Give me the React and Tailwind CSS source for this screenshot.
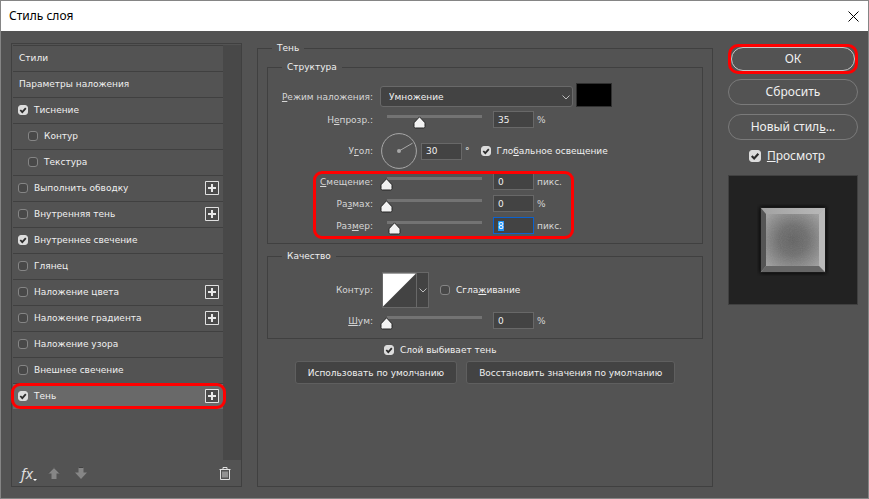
import React, { useEffect, useId, useRef, useState } from "react";
import clsx from "clsx";

const STYLES = [
  { name: "Тиснение", checked: true },
  { name: "Контур", nested: true },
  { name: "Текстура", nested: true },
  { name: "Выполнить обводку", plus: true },
  { name: "Внутренняя тень", plus: true },
  { name: "Внутреннее свечение", checked: true },
  { name: "Глянец" },
  { name: "Наложение цвета", plus: true },
  { name: "Наложение градиента", plus: true },
  { name: "Наложение узора" },
  { name: "Внешнее свечение" },
  { name: "Тень", checked: true, plus: true, active: true },
];

function Check({ children, checked, className, large }) {
  return (
    <label className={clsx("flex items-center", className)}>
      <span className="relative flex shrink-0">
        <input
          type="checkbox"
          defaultChecked={checked}
          className={clsx(
            "peer appearance-none rounded-[3px] border border-[#858585] bg-[#484848] checked:border-[#dcdcdc] checked:bg-[#dcdcdc]",
            large ? "size-3" : "size-[10px]"
          )}
        />
        <svg
          viewBox="0 0 10 10"
          className="pointer-events-none absolute inset-0 hidden size-full peer-checked:block"
        >
          <path
            d="M2.3 5 L4.3 7.1 L7.8 3.2"
            fill="none"
            stroke="#2b2b2b"
            strokeWidth="1.8"
          />
        </svg>
      </span>
      <span className="ml-[6px]">{children}</span>
    </label>
  );
}

function PlusButton({ name }) {
  return (
    <button type="button" aria-label={name} className="mr-1 shrink-0">
      <svg viewBox="0 0 14 14" className="block size-[14px]">
        <path
          d="M.5 .5h13v13h-13z"
          fill="#4b4b4b"
          stroke="#e0e0e0"
          strokeWidth="1"
        />
        <path d="M3 7h8M7 3v8" stroke="#e8e8e8" strokeWidth="2" />
      </svg>
    </button>
  );
}

function StylesPanel() {
  return (
    <section className="mt-[2px] flex w-[231px] shrink-0 flex-col border border-[#404040]">
      <div className="flex flex-1 pt-px pl-px">
        <ul className="flex-1">
          {["Стили", "Параметры наложения"].map((name) => (
            <li key={name} className="border-t border-[#404040]">
              <button
                type="button"
                className="flex h-[25px] w-full items-center pb-[2px] pl-[6px]"
              >
                {name}
              </button>
            </li>
          ))}
          {STYLES.map((item) => (
            <li
              key={item.name}
              className={clsx(
                "relative flex h-[26px] items-center justify-between border-t border-[#404040] pb-[2px]",
                item.nested ? "pl-[15px]" : "pl-[5px]",
                item.active && "bg-[#696969]"
              )}
            >
              <Check checked={item.checked}>{item.name}</Check>
              {item.plus && <PlusButton name={item.name} />}
              {item.active && (
                <span className="pointer-events-none absolute -top-px -right-[3px] bottom-0 -left-[2px] rounded-[9px] border-3 border-[#ff0000]" />
              )}
            </li>
          ))}
        </ul>
        <div className="w-[18px] bg-[#484848]" />
      </div>
      <div className="flex h-[26px] items-center pr-[10px] pl-[9px]">
        <button
          type="button"
          aria-label="fx"
          className="flex items-end font-['Noto_Sans',sans-serif] text-[15px] leading-4 text-[#dedede] italic"
        >
          fx
          <svg viewBox="0 0 4 2" className="h-[2px] w-1">
            <path d="M0 0h4L2 2z" fill="#fff" />
          </svg>
        </button>
        <button type="button" aria-label="Вверх" className="ml-[11px]">
          <svg viewBox="0 0 12 12" className="block size-3">
            <path d="M6 0l6 6.5H8.5V12h-5V6.5H0z" fill="#868686" />
            <path d="M0 6.500L6 .5l6 6" fill="none" stroke="#424242" />
          </svg>
        </button>
        <button type="button" aria-label="Вниз" className="ml-[15px]">
          <svg viewBox="0 0 12 12" className="block size-3">
            <path d="M6 12l6-6.500H8.500V0h-5v5.500H0z" fill="#868686" />
            <path d="M3.500 .5h5" stroke="#424242" />
          </svg>
        </button>
        <button type="button" aria-label="Удалить" className="ml-auto">
          <svg
            viewBox="0 0 12 13"
            className="block h-[13px] w-3"
            fill="none"
            stroke="#e0e0e0"
          >
            <path d="M.5 2.500h11M4 2.500v-2h4v2M1.500 2.500v10h9v-10" />
            <path d="M4 4.500v6M6 4.500v6M8 4.500v6" strokeWidth=".9" />
          </svg>
        </button>
      </div>
    </section>
  );
}

function Group({ title, className, children }) {
  return (
    <fieldset className={clsx("min-w-0 border border-[#404040]", className)}>
      <legend className="ml-[14px] px-[5px] leading-[14px]">{title}</legend>
      {children}
    </fieldset>
  );
}

function Caption({ htmlFor, children }) {
  return (
    <label
      htmlFor={htmlFor}
      className="w-[105px] shrink-0 text-right whitespace-nowrap text-[#d6d6d6]"
    >
      {children}
    </label>
  );
}

function NumberBox({ selected, ...props }) {
  const ref = useRef(null);

  useEffect(() => {
    if (selected) {
      ref.current.focus();
      ref.current.select();
    }
  }, [selected]);

  return (
    <input
      ref={ref}
      type="text"
      className="h-[17px] w-[41px] shrink-0 border border-[#686868] bg-[#434343] pl-1 outline-none selection:bg-[#1c94f7] selection:text-white focus:border-[#0a62d0]"
      {...props}
    />
  );
}

function SliderRow({ caption, name, initial, unit, selected, className }) {
  const id = useId();
  const [value, setValue] = useState(initial);

  return (
    <div className={clsx("flex h-[17px] items-center", className)}>
      <Caption htmlFor={id}>{caption}</Caption>
      <div className="relative ml-[14px] h-full w-[95px]">
        <div className="mt-1 h-[3px] bg-[#737373]" />
        <svg
          viewBox="0 0 13 13"
          className="absolute top-[5px] size-[13px] -translate-x-[7px]"
          style={{ left: `${value}%` }}
        >
          <path
            d="M6.500 .8L11.500 6.200Q12 6.800 12 7.500V10.500Q12 12 10.500 12H2.500Q1 12 1 10.500V7.500Q1 6.800 1.500 6.200z"
            fill="#f2f2f2"
            stroke="#262626"
          />
        </svg>
        <input
          type="range"
          min="0"
          max="100"
          aria-label={name}
          value={value}
          onChange={(e) => setValue(Number(e.target.value))}
          className="absolute inset-0 h-full w-full opacity-0"
        />
      </div>
      <div className="mr-[3px] ml-[11px] flex">
        <NumberBox
          id={id}
          value={value}
          selected={selected}
          onChange={(e) => setValue(Number(e.target.value) || 0)}
        />
      </div>
      <span className="text-[#d6d6d6]">{unit}</span>
    </div>
  );
}

function Structure() {
  return (
    <Group title="Структура" className="mx-[9px] mt-[5px] pb-[9px]">
      <div className="mt-[9px] flex h-6 items-end">
        <div className="flex h-[21px] items-center">
          <Caption htmlFor="blend">
            <u>Р</u>ежим наложения:
          </Caption>
          <div className="relative ml-[7px]">
            <select
              id="blend"
              className="block h-[21px] w-[193px] appearance-none rounded-[3px] border border-[#696969] bg-[#434343] pl-2"
            >
              <option>Умножение</option>
            </select>
            <svg
              viewBox="0 0 8 5"
              className="pointer-events-none absolute top-[9px] right-[3px] h-[5px] w-2"
            >
              <path d="M.5 .5L4 4L7.500 .5" fill="none" stroke="#bdbdbd" />
            </svg>
          </div>
        </div>
        <button
          type="button"
          aria-label="Цвет"
          className="ml-[3px] h-6 w-9 border border-[#303030] bg-black"
        />
      </div>
      <SliderRow
        className="mt-1"
        name="Непрозрачность"
        caption={
          <>
            Н<u>е</u>прозр.:
          </>
        }
        initial={35}
        unit="%"
      />
      <div className="mt-[5px] flex h-9 items-center">
        <Caption htmlFor="angle">
          У<u>г</u>ол:
        </Caption>
        <svg viewBox="0 0 36 36" className="ml-2 size-9" fill="none">
          <circle cx="18" cy="18" r="17.400" stroke="#a8a8a8" />
          <path d="M18 18L31.500 10.200" stroke="#a8a8a8" />
          <circle cx="18" cy="18" r="2" fill="#a8a8a8" />
        </svg>
        <div className="mr-[3px] ml-1 flex">
          <NumberBox id="angle" defaultValue="30" />
        </div>
        <span>°</span>
        <Check checked className="ml-[11px]">
          Гло<u>б</u>альное освещение
        </Check>
      </div>
      <div className="relative mt-1 flex flex-col gap-[5px]">
        <SliderRow
          name="Смещение"
          caption={
            <>
              <u>С</u>мещение:
            </>
          }
          initial={0}
          unit="пикс."
        />
        <SliderRow
          name="Размах"
          caption={
            <>
              Ра<u>з</u>мах:
            </>
          }
          initial={0}
          unit="%"
        />
        <SliderRow
          name="Размер"
          caption={
            <>
              Раз<u>м</u>ер:
            </>
          }
          initial={8}
          unit="пикс."
          selected
        />
        <span className="pointer-events-none absolute -top-[2px] -bottom-[5px] left-[45px] w-[261px] rounded-[9px] border-3 border-[#ff0000]" />
      </div>
    </Group>
  );
}

function Quality() {
  return (
    <Group title="Качество" className="mx-[9px] mt-[5px] pb-[9px]">
      <div className="mt-[9px] flex h-9 items-center">
        <Caption htmlFor="contour">Контур:</Caption>
        <button
          type="button"
          id="contour"
          aria-label="Контур"
          className="ml-[9px] flex h-9 w-[47px] items-center border border-[#686868] bg-[#434343]"
        >
          <svg
            viewBox="0 0 34 34"
            className="size-[34px] border-r border-[#686868]"
          >
            <path d="M0 0h34L0 34z" fill="#fff" />
          </svg>
          <svg viewBox="0 0 8 5" className="ml-[2px] h-[5px] w-2" fill="none">
            <path d="M.5 .5L4 4L7.500 .5" stroke="#bdbdbd" />
          </svg>
        </button>
        <Check className="ml-[11px]">
          Сгла<u>ж</u>ивание
        </Check>
      </div>
      <SliderRow
        className="mt-1"
        name="Шум"
        caption={
          <>
            <u>Ш</u>ум:
          </>
        }
        initial={0}
        unit="%"
      />
    </Group>
  );
}

function DefaultButton({ children }) {
  return (
    <button
      type="button"
      className="h-[23px] rounded-[3px] border border-[#5f5f5f] bg-[#434343] px-3"
    >
      {children}
    </button>
  );
}

function PillButton({ className, children }) {
  return (
    <button
      type="button"
      className={clsx("w-full rounded-full border", className)}
    >
      {children}
    </button>
  );
}

function Preview() {
  return (
    <div className="mt-3 flex aspect-square w-full items-center justify-center border border-[#404040] bg-[#222222]">
      <svg viewBox="0 0 72 72" className="size-[72px]">
        <defs>
          <radialGradient id="face" r=".75">
            <stop offset="0" stopColor="#626262" />
            <stop offset=".3" stopColor="#6e6e6e" />
            <stop offset="1" stopColor="#bababa" />
          </radialGradient>
          <linearGradient id="edgeTop">
            <stop offset="0" stopColor="#a2a2a2" />
            <stop offset="1" stopColor="#b8b8b8" />
          </linearGradient>
          <filter id="soft">
            <feGaussianBlur stdDeviation="2" />
          </filter>
          <filter id="grain" x="0" y="0" width="1" height="1">
            <feTurbulence baseFrequency=".9" type="fractalNoise" />
            <feColorMatrix type="saturate" values="0" />
          </filter>
        </defs>
        <path d="M3 3h66v66h-66z" fill="#111" filter="url(#soft)" />
        <path d="M4 4h64v64h-64z" fill="url(#face)" />
        <path d="M4 4h64v64h-64z" filter="url(#grain)" opacity=".14" />
        <path d="M4 4h64l-6 6H9z" fill="url(#edgeTop)" />
        <path d="M68 4v64l-6-6V10z" fill="#b9b9b9" />
        <path d="M4 4v64l5-6V10z" fill="#555" />
        <path d="M4 68h64l-6-6H9z" fill="#666" />
      </svg>
    </div>
  );
}

export default function App() {
  return (
    <div className="flex min-h-screen flex-col border border-[#858585] bg-[#535353] font-['DejaVu_Sans',sans-serif] text-[9px] leading-[14px] text-[#f0f0f0]">
      <header className="flex h-[30px] items-center justify-between bg-white pr-[9px] pl-2 text-black">
        <h1 className="font-['Noto_Sans',sans-serif] text-[12px]">
          Стиль слоя
        </h1>
        <button type="button" aria-label="Закрыть">
          <svg viewBox="0 0 11 11" className="block size-[11px]">
            <path d="M.5 .5l10 10M10.500 .5l-10 10" stroke="#000" />
          </svg>
        </button>
      </header>
      <main className="flex flex-1 px-[10px] pt-[10px] pb-[11px]">
        <StylesPanel />
        <Group title="Тень" className="mx-[15px] flex-1">
          <Structure />
          <Quality />
          <Check checked className="mt-1 pl-[126px]">
            Слой выбивает тень
          </Check>
          <div className="mt-1 flex justify-center gap-[9px]">
            <DefaultButton>Использовать по умолчанию</DefaultButton>
            <DefaultButton>Восстановить значения по умолчанию</DefaultButton>
          </div>
        </Group>
        <aside className="flex w-[130px] shrink-0 flex-col pt-[3px] font-['Noto_Sans',sans-serif] text-[12px]">
          <div className="rounded-[10px] border-3 border-[#ff0000]">
            <PillButton className="h-6 border-[#c8c8c8]">ОК</PillButton>
          </div>
          <PillButton className="mt-[5px] h-[26px] border-[#7a7a7a]">
            Сбросить
          </PillButton>
          <PillButton className="mt-[9px] h-[26px] border-[#7a7a7a]">
            Новый стил<u>ь</u>...
          </PillButton>
          <Check checked large className="mt-[9px] justify-center pr-3">
            <u>П</u>росмотр
          </Check>
          <Preview />
        </aside>
      </main>
    </div>
  );
}
